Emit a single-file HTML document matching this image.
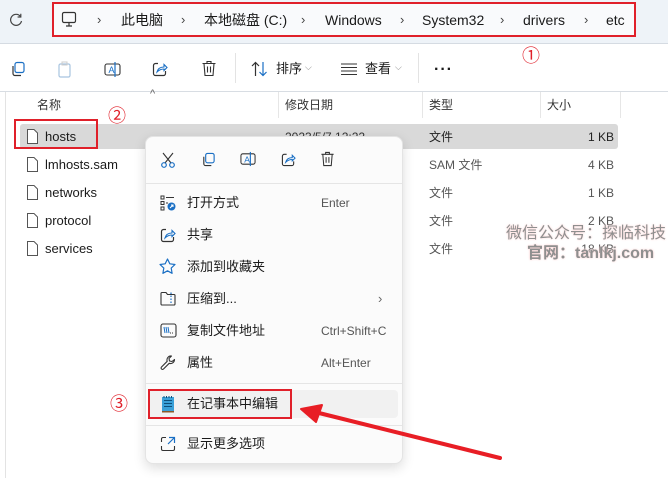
<!DOCTYPE html>
<html><head><meta charset="utf-8"><style>
*{margin:0;padding:0;box-sizing:border-box}
body{width:668px;height:478px;overflow:hidden;background:#fff;font-family:"Liberation Sans","Noto Sans CJK SC",sans-serif;color:#1a1a1a;position:relative;font-size:12px}
.a{position:absolute}
.t{position:absolute;white-space:nowrap;line-height:1}
svg{position:absolute;overflow:visible}
</style></head><body>
<div class="a" style="left:0;top:0;width:668px;height:44px;background:#eef3f8;border-bottom:1px solid #d5dbe2"></div>
<div class="a" style="left:52px;top:2px;width:584px;height:35px;background:#f9fafc;border:2px solid #e0202a"></div>
<svg style="left:8px;top:12px" width="16" height="16" viewBox="0 0 16 16"><path d="M12.5 4.5A5.5 5.5 0 1 0 13.5 9" fill="none" stroke="#444" stroke-width="1.2"/><path d="M12.8 1.8v3.2h-3.2" fill="none" stroke="#444" stroke-width="1.2"/></svg>
<svg style="left:61px;top:11px" width="16" height="16" viewBox="0 0 16 16"><rect x="1.5" y="1.5" width="13" height="10" rx="1.5" fill="none" stroke="#333" stroke-width="1.2"/><path d="M5 15h6M8 11.5V15" stroke="#333" stroke-width="1.2"/></svg>
<div class="t" style="left:97px;top:13px;font-size:13px;color:#444">›</div>
<div class="t" style="left:121px;top:13px;font-size:14px">此电脑</div>
<div class="t" style="left:181px;top:13px;font-size:13px;color:#444">›</div>
<div class="t" style="left:204px;top:13px;font-size:14px">本地磁盘 (C:)</div>
<div class="t" style="left:301px;top:13px;font-size:13px;color:#444">›</div>
<div class="t" style="left:325px;top:13px;font-size:14px">Windows</div>
<div class="t" style="left:400px;top:13px;font-size:13px;color:#444">›</div>
<div class="t" style="left:422px;top:13px;font-size:14px">System32</div>
<div class="t" style="left:500px;top:13px;font-size:13px;color:#444">›</div>
<div class="t" style="left:523px;top:13px;font-size:14px">drivers</div>
<div class="t" style="left:584px;top:13px;font-size:13px;color:#444">›</div>
<div class="t" style="left:606px;top:13px;font-size:14px">etc</div>
<div class="t" style="left:522px;top:47px;font-size:18px;color:#e0202a">①</div>
<!-- toolbar -->
<div class="a" style="left:0;top:91px;width:668px;height:1px;background:#d8dde3"></div>
<svg style="left:10px;top:61px" width="16" height="16" viewBox="0 0 16 16"><rect x="5" y="1.5" width="9" height="10" rx="2" fill="none" stroke="#1a6fc4" stroke-width="1.2"/><path d="M3 5v7.5a2 2 0 0 0 2 2h6" fill="none" stroke="#333" stroke-width="1.2"/></svg>
<svg style="left:57px;top:61px" width="16" height="17" viewBox="0 0 16 17"><rect x="2" y="3" width="11" height="13" rx="1.5" fill="none" stroke="#a8c4e0" stroke-width="1.2"/><rect x="5" y="1" width="5" height="3" fill="none" stroke="#ccc"/></svg>
<svg style="left:104px;top:61px" width="17" height="17" viewBox="0 0 17 17"><rect x="1" y="3" width="15" height="11" rx="2" fill="none" stroke="#333" stroke-width="1.1"/><text x="4.5" y="12" font-size="9" fill="#1a6fc4" font-family="Liberation Sans">A</text><path d="M11 1v15" stroke="#1a6fc4" stroke-width="1.2"/></svg>
<svg style="left:152px;top:61px" width="16" height="16" viewBox="0 0 16 16"><path d="M6 2.5H3.5a2 2 0 0 0-2 2v8a2 2 0 0 0 2 2h8a2 2 0 0 0 2-2V10" fill="none" stroke="#333" stroke-width="1.2"/><path d="M5 11c1-4 4-5 7-5V3.5l3 3-3 3V8c-3 0-5 1-7 3z" fill="none" stroke="#1a6fc4" stroke-width="1.1"/></svg>
<svg style="left:201px;top:60px" width="16" height="17" viewBox="0 0 16 17"><path d="M1.5 3.5h13M6 3.5V1.5h4v2M3 3.5l1 12h8l1-12M6.5 6.5v6M9.5 6.5v6" fill="none" stroke="#333" stroke-width="1.1"/></svg>
<div class="a" style="left:235px;top:53px;width:1px;height:30px;background:#e3e3e3"></div>
<svg style="left:251px;top:61px" width="17" height="16" viewBox="0 0 17 16"><path d="M4.5 15V1.5M1 5l3.5-3.5L8 5" fill="none" stroke="#333" stroke-width="1.2"/><path d="M12 1v13.5M8.5 11l3.5 3.5 3.5-3.5" fill="none" stroke="#1a6fc4" stroke-width="1.2"/></svg>
<div class="t" style="left:276px;top:62px;font-size:13px">排序</div>
<div class="t" style="left:305px;top:63px;font-size:9px;color:#888">⌵</div>
<svg style="left:341px;top:63px" width="16" height="12" viewBox="0 0 16 12"><path d="M0 1h16M0 4.5h16M0 8h16M0 11.5h16" stroke="#333" stroke-width="1"/></svg>
<div class="t" style="left:365px;top:62px;font-size:13px">查看</div>
<div class="t" style="left:395px;top:63px;font-size:9px;color:#888">⌵</div>
<div class="a" style="left:418px;top:53px;width:1px;height:30px;background:#e3e3e3"></div>
<div class="t" style="left:434px;top:62px;font-size:16px;font-weight:bold;letter-spacing:1px">···</div>
<!-- headers -->
<div class="a" style="left:5px;top:92px;width:1px;height:386px;background:#e3e3e3"></div>
<div class="t" style="left:150px;top:89px;font-size:11px;color:#666">^</div>
<div class="t" style="left:37px;top:99px;font-size:12px;color:#333">名称</div>
<div class="a" style="left:278px;top:92px;width:1px;height:26px;background:#e6e6e6"></div>
<div class="t" style="left:285px;top:99px;font-size:12px;color:#333">修改日期</div>
<div class="a" style="left:422px;top:92px;width:1px;height:26px;background:#e6e6e6"></div>
<div class="t" style="left:429px;top:99px;font-size:12px;color:#333">类型</div>
<div class="a" style="left:540px;top:92px;width:1px;height:26px;background:#e6e6e6"></div>
<div class="t" style="left:547px;top:99px;font-size:12px;color:#333">大小</div>
<div class="a" style="left:620px;top:92px;width:1px;height:26px;background:#e6e6e6"></div>
<div class="a" style="left:20px;top:124px;width:598px;height:25px;background:#d9d9d9;border-radius:3px"></div>
<div class="a" style="left:14px;top:119px;width:84px;height:30px;border:2px solid #e0202a"></div>
<div class="t" style="left:108px;top:107px;font-size:18px;color:#e0202a">②</div>
<div class="t" style="left:285px;top:131px;font-size:12px;color:#333">2023/5/7 12:22</div>
<!-- rows -->
<div class="t" style="left:45px;top:130px;font-size:13px">hosts</div>
<div class="t" style="left:45px;top:158px;font-size:13px">lmhosts.sam</div>
<div class="t" style="left:45px;top:186px;font-size:13px">networks</div>
<div class="t" style="left:45px;top:214px;font-size:13px">protocol</div>
<div class="t" style="left:45px;top:242px;font-size:13px">services</div>
<svg style="left:27px;top:129px" width="11" height="15" viewBox="0 0 11 15"><path d="M.5.5h6.5l3.5 3.5v10.5H.5z" fill="#fff" stroke="#555"/></svg>
<svg style="left:27px;top:157px" width="11" height="15" viewBox="0 0 11 15"><path d="M.5.5h6.5l3.5 3.5v10.5H.5z" fill="#fff" stroke="#555"/></svg>
<svg style="left:27px;top:185px" width="11" height="15" viewBox="0 0 11 15"><path d="M.5.5h6.5l3.5 3.5v10.5H.5z" fill="#fff" stroke="#555"/></svg>
<svg style="left:27px;top:213px" width="11" height="15" viewBox="0 0 11 15"><path d="M.5.5h6.5l3.5 3.5v10.5H.5z" fill="#fff" stroke="#555"/></svg>
<svg style="left:27px;top:241px" width="11" height="15" viewBox="0 0 11 15"><path d="M.5.5h6.5l3.5 3.5v10.5H.5z" fill="#fff" stroke="#555"/></svg>
<div class="t" style="left:429px;top:131px;font-size:12px;color:#222">文件</div>
<div class="t" style="left:429px;top:159px;font-size:12px;color:#555">SAM 文件</div>
<div class="t" style="left:429px;top:187px;font-size:12px;color:#555">文件</div>
<div class="t" style="left:429px;top:215px;font-size:12px;color:#555">文件</div>
<div class="t" style="left:429px;top:243px;font-size:12px;color:#555">文件</div>
<div class="t" style="right:54px;top:131px;font-size:12px;color:#222">1 KB</div>
<div class="t" style="right:54px;top:159px;font-size:12px;color:#555">4 KB</div>
<div class="t" style="right:54px;top:187px;font-size:12px;color:#555">1 KB</div>
<div class="t" style="right:54px;top:215px;font-size:12px;color:#555">2 KB</div>
<div class="t" style="right:54px;top:243px;font-size:12px;color:#555">18 KB</div>
<!-- watermark -->
<div class="t" style="left:506px;top:226px;font-size:16px;color:#8f8f8f;text-shadow:0 0 2px #fcc,0 0 2px #fff">微信公众号：探临科技</div>
<div class="t" style="left:527px;top:246px;font-size:16px;color:#8f8f8f;font-weight:bold;text-shadow:0 0 2px #fcc,0 0 2px #fff">官网：tanlkj.com</div>
<!-- menu -->
<div class="a" style="left:145px;top:136px;width:258px;height:328px;background:#fbfbfb;border:1px solid #e4e4e4;border-radius:8px;box-shadow:0 4px 12px rgba(0,0,0,.14)"></div>
<svg style="left:161px;top:152px" width="14" height="16" viewBox="0 0 14 16"><path d="M2 1l8 10M12 1L4 11" stroke="#333" stroke-width="1.1"/><circle cx="3" cy="13" r="2.3" fill="none" stroke="#1a6fc4" stroke-width="1.2"/><circle cx="11" cy="13" r="2.3" fill="none" stroke="#1a6fc4" stroke-width="1.2"/></svg>
<svg style="left:201px;top:152px" width="15" height="15" viewBox="0 0 16 16"><rect x="5" y="1.5" width="9" height="10" rx="2" fill="none" stroke="#1a6fc4" stroke-width="1.2"/><path d="M3 5v7.5a2 2 0 0 0 2 2h6" fill="none" stroke="#333" stroke-width="1.2"/></svg>
<svg style="left:240px;top:151px" width="16" height="16" viewBox="0 0 17 17"><rect x="1" y="3" width="15" height="11" rx="2" fill="none" stroke="#333" stroke-width="1.1"/><text x="4.5" y="12" font-size="9" fill="#1a6fc4" font-family="Liberation Sans">A</text><path d="M11 1v15" stroke="#1a6fc4" stroke-width="1.2"/></svg>
<svg style="left:281px;top:152px" width="15" height="15" viewBox="0 0 16 16"><path d="M6 2.5H3.5a2 2 0 0 0-2 2v8a2 2 0 0 0 2 2h8a2 2 0 0 0 2-2V10" fill="none" stroke="#333" stroke-width="1.2"/><path d="M5 11c1-4 4-5 7-5V3.5l3 3-3 3V8c-3 0-5 1-7 3z" fill="none" stroke="#1a6fc4" stroke-width="1.1"/></svg>
<svg style="left:320px;top:151px" width="15" height="16" viewBox="0 0 16 17"><path d="M1.5 3.5h13M6 3.5V1.5h4v2M3 3.5l1 12h8l1-12M6.5 6.5v6M9.5 6.5v6" fill="none" stroke="#333" stroke-width="1.1"/></svg>
<div class="a" style="left:146px;top:183px;width:256px;height:1px;background:#e5e5e5"></div>
<svg style="left:160px;top:195px" width="16" height="16" viewBox="0 0 16 16"><rect x="1" y="1" width="3" height="3" fill="none" stroke="#333"/><rect x="1" y="6.5" width="3" height="3" fill="none" stroke="#333"/><rect x="1" y="12" width="3" height="3" fill="none" stroke="#333"/><path d="M6 2.5h8M6 8h2" stroke="#333"/><circle cx="11.5" cy="11.5" r="4" fill="#1a6fc4"/><path d="M10 13l3-3M11 10h2v2" stroke="#fff"/></svg>
<div class="t" style="left:187px;top:196px;font-size:13px">打开方式</div>
<div class="t" style="left:321px;top:197px;font-size:12px;color:#555">Enter</div>
<svg style="left:160px;top:227px" width="16" height="16" viewBox="0 0 16 16"><path d="M6 2.5H3.5a2 2 0 0 0-2 2v8a2 2 0 0 0 2 2h8a2 2 0 0 0 2-2V10" fill="none" stroke="#333" stroke-width="1.2"/><path d="M5 11c1-4 4-5 7-5V3.5l3 3-3 3V8c-3 0-5 1-7 3z" fill="none" stroke="#1a6fc4" stroke-width="1.1"/></svg>
<div class="t" style="left:187px;top:228px;font-size:13px">共享</div>
<svg style="left:159px;top:258px" width="17" height="17" viewBox="0 0 17 17"><path d="M8.5 1l2.3 4.8 5.2.7-3.8 3.6.9 5.2-4.6-2.5-4.6 2.5.9-5.2L1 6.5l5.2-.7z" fill="none" stroke="#1a6fc4" stroke-width="1.2" stroke-linejoin="round"/></svg>
<div class="t" style="left:187px;top:260px;font-size:13px">添加到收藏夹</div>
<svg style="left:160px;top:291px" width="16" height="15" viewBox="0 0 16 15"><path d="M1 2.5a1 1 0 0 1 1-1h4l1.5 2H14a1 1 0 0 1 1 1V13a1 1 0 0 1-1 1H2a1 1 0 0 1-1-1z" fill="none" stroke="#333" stroke-width="1.1"/><path d="M11 1.5v12" stroke="#1a6fc4" stroke-width="1.2" stroke-dasharray="1.5 1.5"/></svg>
<div class="t" style="left:187px;top:292px;font-size:13px">压缩到...</div>
<div class="t" style="left:378px;top:292px;font-size:13px;color:#666">›</div>
<svg style="left:160px;top:323px" width="17" height="15" viewBox="0 0 17 15"><rect x="1" y="1" width="15" height="13" rx="2" fill="none" stroke="#333" stroke-width="1.1"/><path d="M4 4l1 6M6 4l1 6M8 4l1 6" stroke="#1a6fc4"/><path d="M10 10h1M12 10h1" stroke="#333"/></svg>
<div class="t" style="left:187px;top:324px;font-size:13px">复制文件地址</div>
<div class="t" style="left:321px;top:325px;font-size:12px;color:#555">Ctrl+Shift+C</div>
<svg style="left:160px;top:355px" width="16" height="16" viewBox="0 0 16 16"><path d="M14.5 4.5a4 4 0 0 1-5.3 3.8L3.5 14a1.4 1.4 0 0 1-2-2l5.7-5.7A4 4 0 0 1 11.5 1L9 3.5l.5 2.5 2.5.5z" fill="none" stroke="#333" stroke-width="1.1" stroke-linejoin="round"/></svg>
<div class="t" style="left:187px;top:356px;font-size:13px">属性</div>
<div class="t" style="left:321px;top:357px;font-size:12px;color:#555">Alt+Enter</div>
<div class="a" style="left:146px;top:383px;width:256px;height:1px;background:#e5e5e5"></div>
<div class="a" style="left:149px;top:390px;width:249px;height:28px;background:#f1f1f1;border-radius:4px"></div>
<div class="a" style="left:148px;top:389px;width:144px;height:30px;border:2px solid #e0202a"></div>
<div class="t" style="left:110px;top:395px;font-size:18px;color:#e0202a">③</div>
<svg style="left:161px;top:395px" width="14" height="18" viewBox="0 0 14 18"><rect x="1" y="2" width="12" height="14" fill="#3aa0d8"/><path d="M3 5.5h8M3 8.5h8M3 11.5h8" stroke="#0e4f7a"/><rect x="1" y="16" width="12" height="1.5" fill="#8a5a2a"/><path d="M3 1v2M5.5 1v2M8 1v2M10.5 1v2" stroke="#0e4f7a"/></svg>
<div class="t" style="left:187px;top:397px;font-size:13px">在记事本中编辑</div>
<div class="a" style="left:146px;top:425px;width:256px;height:1px;background:#e5e5e5"></div>
<svg style="left:160px;top:436px" width="16" height="16" viewBox="0 0 16 16"><path d="M6 1.5H3a1.5 1.5 0 0 0-1.5 1.5v3M1.5 10v3A1.5 1.5 0 0 0 3 14.5h10a1.5 1.5 0 0 0 1.5-1.5V10" fill="none" stroke="#333" stroke-width="1.1"/><path d="M9 1.5h5.5V7M14.5 1.5L8 8" fill="none" stroke="#1a6fc4" stroke-width="1.2"/></svg>
<div class="t" style="left:187px;top:437px;font-size:13px">显示更多选项</div>
<!-- arrow -->
<svg style="left:0;top:0" width="668" height="478"><path d="M500 458L315 412" stroke="#e81e25" stroke-width="4" stroke-linecap="round"/><path d="M301 409L322 405L316 422z" fill="#e81e25" stroke="#e81e25" stroke-width="2" stroke-linejoin="round"/></svg>
</body></html>
